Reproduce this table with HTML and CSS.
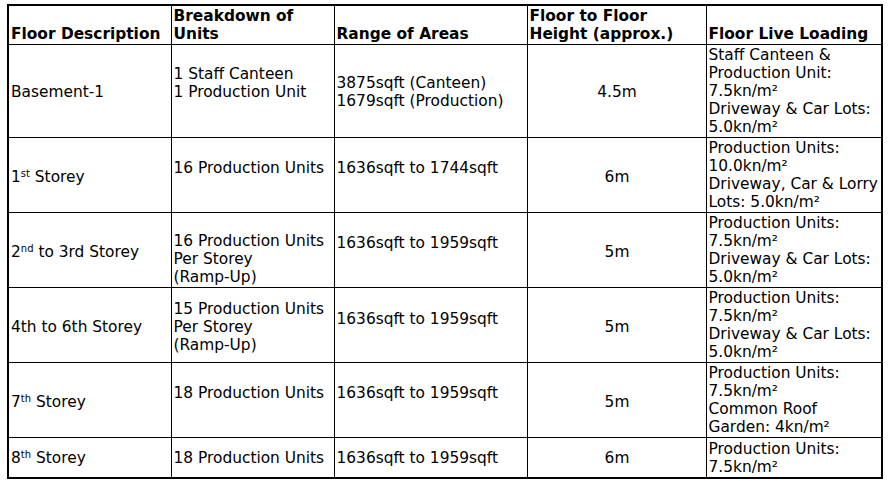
FILE: index.html
```html
<!DOCTYPE html>
<html>
<head>
<meta charset="utf-8">
<link rel="stylesheet" href="styles.css">
</head>
<body>
<table class="spec">
  <colgroup>
    <col class="c1"><col class="c2"><col class="c3"><col class="c4"><col class="c5">
  </colgroup>
  <thead>
    <tr>
      <th>Floor Description</th>
      <th>Breakdown of<br>Units</th>
      <th>Range of Areas</th>
      <th>Floor to Floor<br>Height (approx.)</th>
      <th>Floor Live Loading</th>
    </tr>
  </thead>
  <tbody>
    <tr>
      <td class="lo1">Basement-1</td>
      <td class="up9">1 Staff Canteen<br>1 Production Unit</td>
      <td class="lo1">3875sqft (Canteen)<br>1679sqft (Production)</td>
      <td class="h lo1">4.5m</td>
      <td>Staff Canteen &amp;<br>Production Unit:<br>7.5kn/m²<br>Driveway &amp; Car Lots:<br>5.0kn/m²</td>
    </tr>
    <tr>
      <td class="lo2">1<sup>st</sup> Storey</td>
      <td class="up7">16 Production Units</td>
      <td class="up7">1636sqft to 1744sqft</td>
      <td class="h lo2">6m</td>
      <td>Production Units:<br>10.0kn/m²<br>Driveway, Car &amp; Lorry<br>Lots: 5.0kn/m²</td>
    </tr>
    <tr>
      <td class="lo2">2<sup>nd</sup> to 3rd Storey</td>
      <td class="dn9">16 Production Units<br>Per Storey<br>(Ramp-Up)</td>
      <td class="up7">1636sqft to 1959sqft</td>
      <td class="h lo2">5m</td>
      <td>Production Units:<br>7.5kn/m²<br>Driveway &amp; Car Lots:<br>5.0kn/m²</td>
    </tr>
    <tr>
      <td class="lo2">4th to 6th Storey</td>
      <td class="dn2">15 Production Units<br>Per Storey<br>(Ramp-Up)</td>
      <td class="up6">1636sqft to 1959sqft</td>
      <td class="h lo2">5m</td>
      <td>Production Units:<br>7.5kn/m²<br>Driveway &amp; Car Lots:<br>5.0kn/m²</td>
    </tr>
    <tr>
      <td class="lo2">7<sup>th</sup> Storey</td>
      <td class="up7">18 Production Units</td>
      <td class="up7">1636sqft to 1959sqft</td>
      <td class="h lo2">5m</td>
      <td>Production Units:<br>7.5kn/m²<br>Common Roof<br>Garden: 4kn/m²</td>
    </tr>
    <tr class="last">
      <td>8<sup>th</sup> Storey</td>
      <td>18 Production Units</td>
      <td>1636sqft to 1959sqft</td>
      <td class="h">6m</td>
      <td>Production Units:<br>7.5kn/m²</td>
    </tr>
  </tbody>
</table>
</body>
</html>
```

FILE: styles.css
```css
html, body {
  margin: 0;
  padding: 0;
  background: #ffffff;
}

body {
  padding: 4px 0 0 7px;
  font-family: "DejaVu Sans", Verdana, sans-serif;
  font-size: 15.4px;
  line-height: 18px;
  color: #000000;
}

.spec {
  border-collapse: collapse;
  table-layout: fixed;
  width: 874px;
  border: 2px solid #000000;
}

.c1 { width: 163px; }
.c2 { width: 163px; }
.c3 { width: 193px; }
.c4 { width: 179px; }
.c5 { width: 176px; }

.spec th,
.spec td {
  border: 1px solid #000000;
  padding: 1px 1px 1px 2px;
  white-space: nowrap;
  overflow: hidden;
  text-align: left;
}

.spec th {
  font-weight: bold;
  vertical-align: bottom;
}

.spec td {
  font-weight: normal;
  vertical-align: middle;
}

.spec td.h {
  text-align: center;
}

/* vertical offsets of cell text within rows, as in the source table */
.spec td.lo1 { padding-top: 3px; }
.spec td.lo2 { padding-top: 5px; }
.spec td.up9 { padding-bottom: 18px; }
.spec td.up7 { padding-bottom: 15px; }
.spec td.up6 { padding-bottom: 13px; }
.spec td.dn9 { padding-top: 19px; }
.spec td.dn2 { padding-top: 5px; }

.spec tr.last td { padding-top: 2px; }

.spec sup {
  font-size: 10px;
  line-height: 0;
  vertical-align: 5px;
}
```
